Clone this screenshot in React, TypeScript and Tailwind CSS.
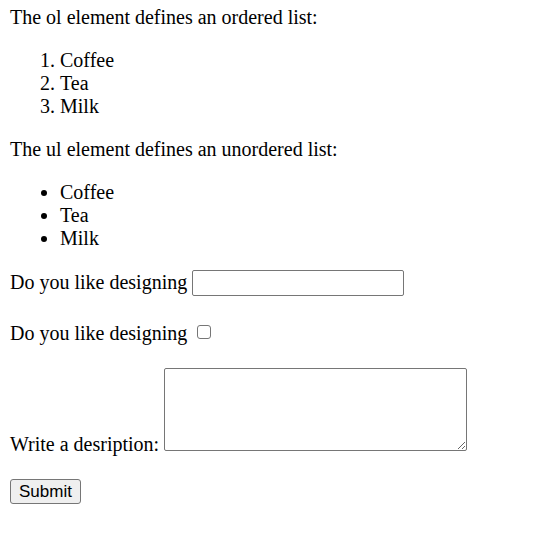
export default function App() {
  return (
    <div className="min-h-screen bg-white px-[10px] pt-[6px] font-['Liberation_Serif','Times_New_Roman',serif] text-[20px] leading-[23px] text-black">
      {/* Ordered list */}
      <p>The ol element defines an ordered list:</p>
      <ol className="mt-[20px] list-decimal pl-[50px]">
        <li>Coffee</li>
        <li>Tea</li>
        <li>Milk</li>
      </ol>

      {/* Unordered list */}
      <p className="mt-[20px]">The ul element defines an unordered list:</p>
      <ul className="mt-[20px] list-disc pl-[50px]">
        <li>Coffee</li>
        <li>Tea</li>
        <li>Milk</li>
      </ul>

      {/* Form */}
      <form onSubmit={(e) => e.preventDefault()}>
        <div className="mt-[19px] flex items-start">
          <label className="mt-[2px]">Do you like designing</label>
          <input
            type="text"
            className="ml-[5px] mt-[1px] h-[26px] w-[212px] rounded-[2px] border border-[#767676] bg-white px-[2px] font-['Liberation_Sans',Arial,sans-serif] text-[17px] outline-none"
          />
        </div>

        <div className="mt-[26px] flex items-start">
          <label>Do you like designing</label>
          <input
            type="checkbox"
            className="ml-[10px] mt-[3px] h-[14px] w-[14px] appearance-none rounded-[3px] border border-[#767676] bg-white"
          />
        </div>

        <div className="mt-[23px] flex items-end">
          <label>Write a desription:</label>
          <textarea className="mb-[5px] ml-[5px] h-[83px] w-[303px] resize rounded-[2px] border border-[#767676] bg-white font-['Liberation_Mono',monospace] text-[17px] outline-none" />
        </div>

        <button
          type="submit"
          className="mt-[23px] h-[25px] w-[71px] rounded-[3px] border border-[#767676] bg-[#efefef] font-['Liberation_Sans',Arial,sans-serif] text-[17px] leading-none text-black"
        >
          Submit
        </button>
      </form>
    </div>
  )
}
